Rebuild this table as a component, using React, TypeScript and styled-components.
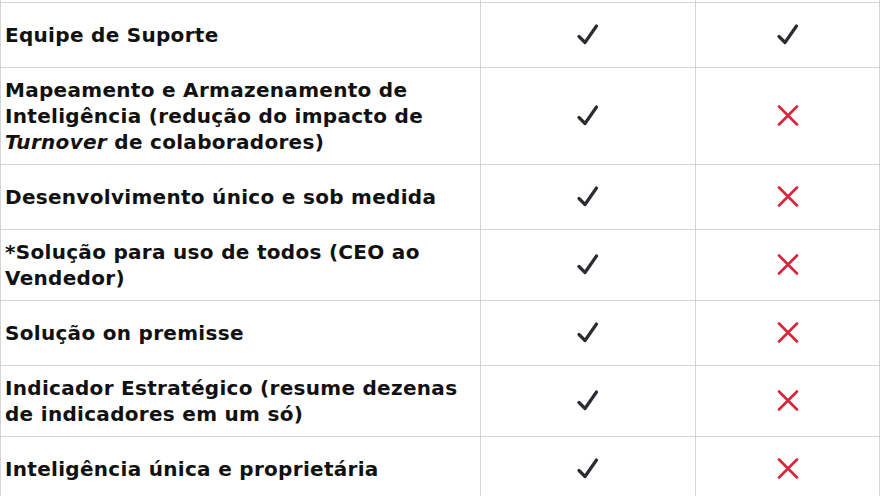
import * as React from 'react';
import styled, { createGlobalStyle } from 'styled-components';

const GlobalStyle = createGlobalStyle`
  html, body {
    margin: 0;
    padding: 0;
    background: #ffffff;
  }
  body {
    font-family: "DejaVu Sans", "Noto Sans", sans-serif;
    color: #111111;
  }
`;

const Table = styled.div`
  width: 880px;
  display: grid;
  grid-template-columns: 481px 215px 184px;
`;

const Cell = styled.div<{ $first?: boolean; $lead?: boolean }>`
  box-sizing: border-box;
  border-right: 1px solid #d4d4d4;
  border-bottom: 1px solid #d4d4d4;
  border-left: ${(p) => (p.$first ? '1px solid #d4d4d4' : 'none')};
  min-height: ${(p) => (p.$lead ? '3px' : '65px')};
  height: ${(p) => (p.$lead ? '3px' : 'auto')};
  display: flex;
  align-items: center;
`;

const Label = styled(Cell)`
  padding: 9px 6px 9px 4px;
  font-size: 20px;
  font-weight: 700;
  line-height: 26px;
  letter-spacing: 0.3px;
`;

const Mark = styled(Cell)`
  justify-content: center;
`;

const Check = () => (
  <svg width="24" height="24" viewBox="0 0 24 24" fill="none">
    <path
      d="M3 13.5 L9 19.5 L20.5 3"
      stroke="#2a2c31"
      strokeWidth="3.2"
      strokeLinecap="round"
      strokeLinejoin="round"
    />
  </svg>
);

const Cross = () => (
  <svg width="24" height="24" viewBox="0 0 24 24" fill="none">
    <path
      d="M3 2.5 L21 20.5 M21 2.5 L3 20.5"
      stroke="#d9243b"
      strokeWidth="2.6"
      strokeLinecap="round"
    />
  </svg>
);

type Row = { label: React.ReactNode; ours: boolean; theirs: boolean };

const rows: Row[] = [
  { label: 'Equipe de Suporte', ours: true, theirs: true },
  {
    label: (
      <>
        Mapeamento e Armazenamento de Inteligência (redução do impacto de{' '}
        <em>Turnover</em> de colaboradores)
      </>
    ),
    ours: true,
    theirs: false,
  },
  { label: 'Desenvolvimento único e sob medida', ours: true, theirs: false },
  { label: '*Solução para uso de todos (CEO ao Vendedor)', ours: true, theirs: false },
  { label: 'Solução on premisse', ours: true, theirs: false },
  {
    label: 'Indicador Estratégico (resume dezenas de indicadores em um só)',
    ours: true,
    theirs: false,
  },
  { label: 'Inteligência única e proprietária', ours: true, theirs: false },
];

const App: React.FC = () => {
  return (
    <>
      <GlobalStyle />
      <Table>
        <Cell $first $lead />
        <Cell $lead />
        <Cell $lead />
        {rows.map((row, index) => (
          <React.Fragment key={index}>
            <Label $first>
              <span>{row.label}</span>
            </Label>
            <Mark>{row.ours ? <Check /> : <Cross />}</Mark>
            <Mark>{row.theirs ? <Check /> : <Cross />}</Mark>
          </React.Fragment>
        ))}
      </Table>
    </>
  );
};

export default App;
